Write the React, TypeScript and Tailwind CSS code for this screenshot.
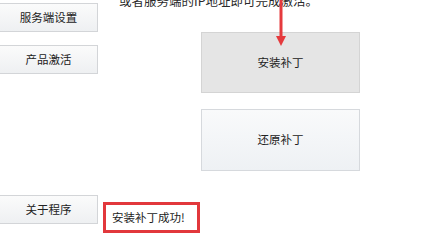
const font = { fontFamily: '"Noto Sans CJK SC", "Noto Sans", sans-serif' };

const SideButton = ({ label }: { label: string }) => (
  <div className="-ml-px flex h-[29px] w-[99px] items-center justify-center border border-[#d3d5d8] bg-gradient-to-b from-[#fbfbfb] to-[#eef0f2] text-[11.5px] text-[#222]">
    {label}
  </div>
);

export default function App() {
  return (
    <div
      className="relative flex h-[233px] w-[447px] flex-col overflow-hidden bg-white text-[#222]"
      style={font}
    >
      <div className="flex">
        {/* left menu */}
        <div className="flex w-[98px] flex-col gap-[13px] pt-[3px]">
          <SideButton label="服务端设置" />
          <SideButton label="产品激活" />
        </div>

        {/* right panel */}
        <div className="flex flex-col">
          <p className="-mt-[7px] ml-[21px] text-[12.5px] leading-[16px] text-[#2a2a2a]">
            或者服务端的IP地址即可完成激活。
          </p>
          <div className="ml-[103px] mt-[23px] flex flex-col gap-[16px]">
            <div className="flex h-[61px] w-[159px] items-center justify-center border border-[#d4d4d4] bg-[#e5e5e5] text-[11.5px]">
              安装补丁
            </div>
            <div className="flex h-[62px] w-[159px] items-center justify-center border border-[#d6d9dd] bg-gradient-to-b from-[#f9fafb] to-[#eef1f4] text-[11.5px]">
              还原补丁
            </div>
          </div>
        </div>
      </div>

      {/* bottom row */}
      <div className="mt-auto flex items-start">
        <div className="mb-[8px]">
          <SideButton label="关于程序" />
        </div>
        <div className="ml-[5px] mt-[7px] flex h-[31px] w-[97px] items-center border-[3px] border-[#e2383c] pl-[6px] text-[11.5px]">
          安装补丁成功!
        </div>
      </div>

      {/* annotation arrow */}
      <svg className="absolute left-[274px] top-0" width="14" height="48" viewBox="0 0 14 48">
        <line x1="7" y1="0" x2="7" y2="38" stroke="#e53a3d" strokeWidth="3" />
        <polygon points="2,36 12,36 7,46" fill="#e53a3d" />
      </svg>
    </div>
  );
}
